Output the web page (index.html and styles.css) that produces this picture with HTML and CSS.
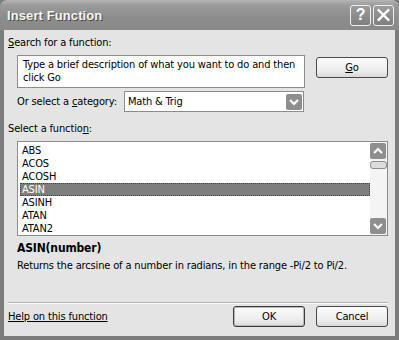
FILE: index.html
```html
<!DOCTYPE html>
<html lang="en">
<head>
  <meta charset="UTF-8">
  <title>Insert Function</title>
  <link rel="stylesheet" href="styles.css">
</head>
<body>
  <div class="window">
    <div class="titlebar">
      <div class="title">Insert Function</div>
      <div class="caption-buttons">
        <div class="cap-btn">?</div>
        <div class="cap-btn">
          <svg viewBox="0 0 20 20" width="20" height="20">
            <path d="M5,5 L15,15 M15,5 L5,15" stroke="#fff" stroke-width="2.6" stroke-linecap="square"/>
          </svg>
        </div>
      </div>
    </div>

    <div class="client">
      <div class="label"><u>S</u>earch for a function:</div>

      <div class="search-row">
        <div class="search-box">Type a brief description of what you want to do and then click Go</div>
        <div class="btn go-btn"><u>G</u>o</div>
      </div>

      <div class="category-row">
        <div class="label">Or select a <u>c</u>ategory:</div>
        <div class="select">
          <span>Math &amp; Trig</span>
          <div class="drop-btn">
            <svg viewBox="0 0 16 16" width="16" height="16">
              <path d="M4,6 L8,10 L12,6" stroke="#fff" stroke-width="2.2" fill="none"/>
            </svg>
          </div>
        </div>
      </div>

      <div class="label select-label">Select a functio<u>n</u>:</div>

      <div class="listbox">
        <div class="items">
          <div class="item">ABS</div>
          <div class="item">ACOS</div>
          <div class="item">ACOSH</div>
          <div class="item selected">ASIN</div>
          <div class="item">ASINH</div>
          <div class="item">ATAN</div>
          <div class="item">ATAN2</div>
        </div>
        <div class="scrollbar">
          <div class="scroll-btn">
            <svg viewBox="0 0 16 16" width="16" height="16">
              <path d="M4,10 L8,6 L12,10" stroke="#fff" stroke-width="2.2" fill="none"/>
            </svg>
          </div>
          <div class="thumb"></div>
          <div class="track"></div>
          <div class="scroll-btn">
            <svg viewBox="0 0 16 16" width="16" height="16">
              <path d="M4,6 L8,10 L12,6" stroke="#fff" stroke-width="2.2" fill="none"/>
            </svg>
          </div>
        </div>
      </div>

      <div class="func-sig">ASIN(number)</div>
      <div class="func-desc">Returns the arcsine of a number in radians, in the range -Pi/2 to Pi/2.</div>

      <div class="separator"></div>

      <div class="footer">
        <a class="help-link" href="#">Help on this function</a>
        <div class="buttons">
          <div class="btn ok-btn">OK</div>
          <div class="btn">Cancel</div>
        </div>
      </div>
    </div>
  </div>
</body>
</html>
```

FILE: styles.css
```css
body {
  margin: 0;
  background: #e4e4e4;
  font-family: Tahoma, 'DejaVu Sans Condensed', 'Liberation Sans', sans-serif;
  font-size: 11px;
  letter-spacing: -0.15px;
  color: #000;
}

.window {
  width: 399px;
  height: 340px;
  box-sizing: border-box;
  background: #7c7c7c;
  padding: 0 4px 4px 4px;
  display: flex;
  flex-direction: column;
}

.titlebar {
  height: 30px;
  margin: 0 -4px;
  padding: 0 5px 0 7px;
  display: flex;
  align-items: center;
  justify-content: space-between;
  background: linear-gradient(#b4b4b4 0%, #9a9a9a 18%, #8c8c8c 60%, #8a8a8a 100%);
  border-radius: 7px 7px 0 0;
}

.title {
  font-family: 'Liberation Sans', Arial, sans-serif;
  font-weight: 700;
  font-size: 13px;
  color: #f4f4f4;
  text-shadow: 1px 1px 0 #4a4a4a;
  letter-spacing: 0.1px;
}

.caption-buttons {
  display: flex;
  gap: 2px;
}

.cap-btn {
  width: 19px;
  height: 19px;
  border: 1px solid #f0f0f0;
  border-radius: 3px;
  background: linear-gradient(#9c9c9c, #7e7e7e);
  color: #fff;
  font-family: 'Liberation Sans', Arial, sans-serif;
  font-weight: 700;
  font-size: 16px;
  display: flex;
  align-items: center;
  justify-content: center;
}

.client {
  flex: 1;
  background: #e4e4e4;
  padding: 6px 7px 0 4px;
  display: flex;
  flex-direction: column;
}

.label {
  line-height: 13px;
}

.search-row {
  display: flex;
  align-items: flex-start;
  margin-top: 6px;
  padding-left: 9px;
}

.search-box {
  width: 276px;
  height: 29px;
  padding: 2px 5px 0 5px;
  background: #fff;
  border: 1px solid #8c8c8c;
  line-height: 13px;
}

.btn {
  width: 70px;
  height: 19px;
  border: 1px solid #4a4a4a;
  border-radius: 3px;
  background: linear-gradient(#fbfbfb, #ececec 70%, #d8d8d8);
  display: flex;
  align-items: center;
  justify-content: center;
  box-sizing: content-box;
}

.go-btn {
  margin-left: 11px;
  margin-top: 2px;
}

.category-row {
  display: flex;
  align-items: center;
  margin-top: 3px;
  padding-left: 9px;
  gap: 7px;
}

.select {
  width: 175px;
  height: 19px;
  background: #fff;
  border: 1px solid #8c8c8c;
  display: flex;
  align-items: center;
  justify-content: space-between;
  padding-left: 3px;
  box-sizing: content-box;
}

.drop-btn,
.scroll-btn {
  width: 16px;
  height: 16px;
  margin-right: 1px;
  background: #8e8e8e;
  border-radius: 2px;
  display: flex;
  align-items: center;
  justify-content: center;
}

.select-label {
  margin-top: 10px;
}

.listbox {
  margin-top: 6px;
  margin-left: 9px;
  width: 369px;
  height: 93px;
  background: #fff;
  border: 1px solid #8c8c8c;
  display: flex;
}

.items {
  flex: 1;
  padding: 2px 0 0 2px;
}

.item {
  height: 13px;
  line-height: 13px;
  padding-left: 2px;
}

.item.selected {
  background: #7e7e7e;
  color: #fff;
  outline: 1px dotted #444;
  outline-offset: -1px;
}

.scrollbar {
  width: 17px;
  padding: 1px 0;
  display: flex;
  flex-direction: column;
  align-items: center;
  background: #f4f4f4;
}

.thumb {
  width: 15px;
  height: 6px;
  margin-top: 2px;
  border: 1px solid #8c8c8c;
  border-radius: 3px;
  background: #dcdcdc;
}

.track {
  flex: 1;
}

.func-sig {
  margin-top: 5px;
  margin-left: 9px;
  font-weight: 700;
  font-size: 12px;
  line-height: 14px;
}

.func-desc {
  margin-top: 4px;
  margin-left: 9px;
  line-height: 13px;
}

.separator {
  margin-top: 30px;
  height: 0;
  border-top: 1px solid #b4b4b4;
  border-bottom: 1px solid #fafafa;
}

.footer {
  display: flex;
  align-items: center;
  justify-content: space-between;
  margin-top: 2px;
}

.help-link {
  color: #000;
  text-decoration: underline;
}

.buttons {
  display: flex;
  gap: 11px;
}

.ok-btn {
  border: 1px solid #3a3a3a;
  box-shadow: inset 0 0 0 1px #b8b8b8;
}
```
